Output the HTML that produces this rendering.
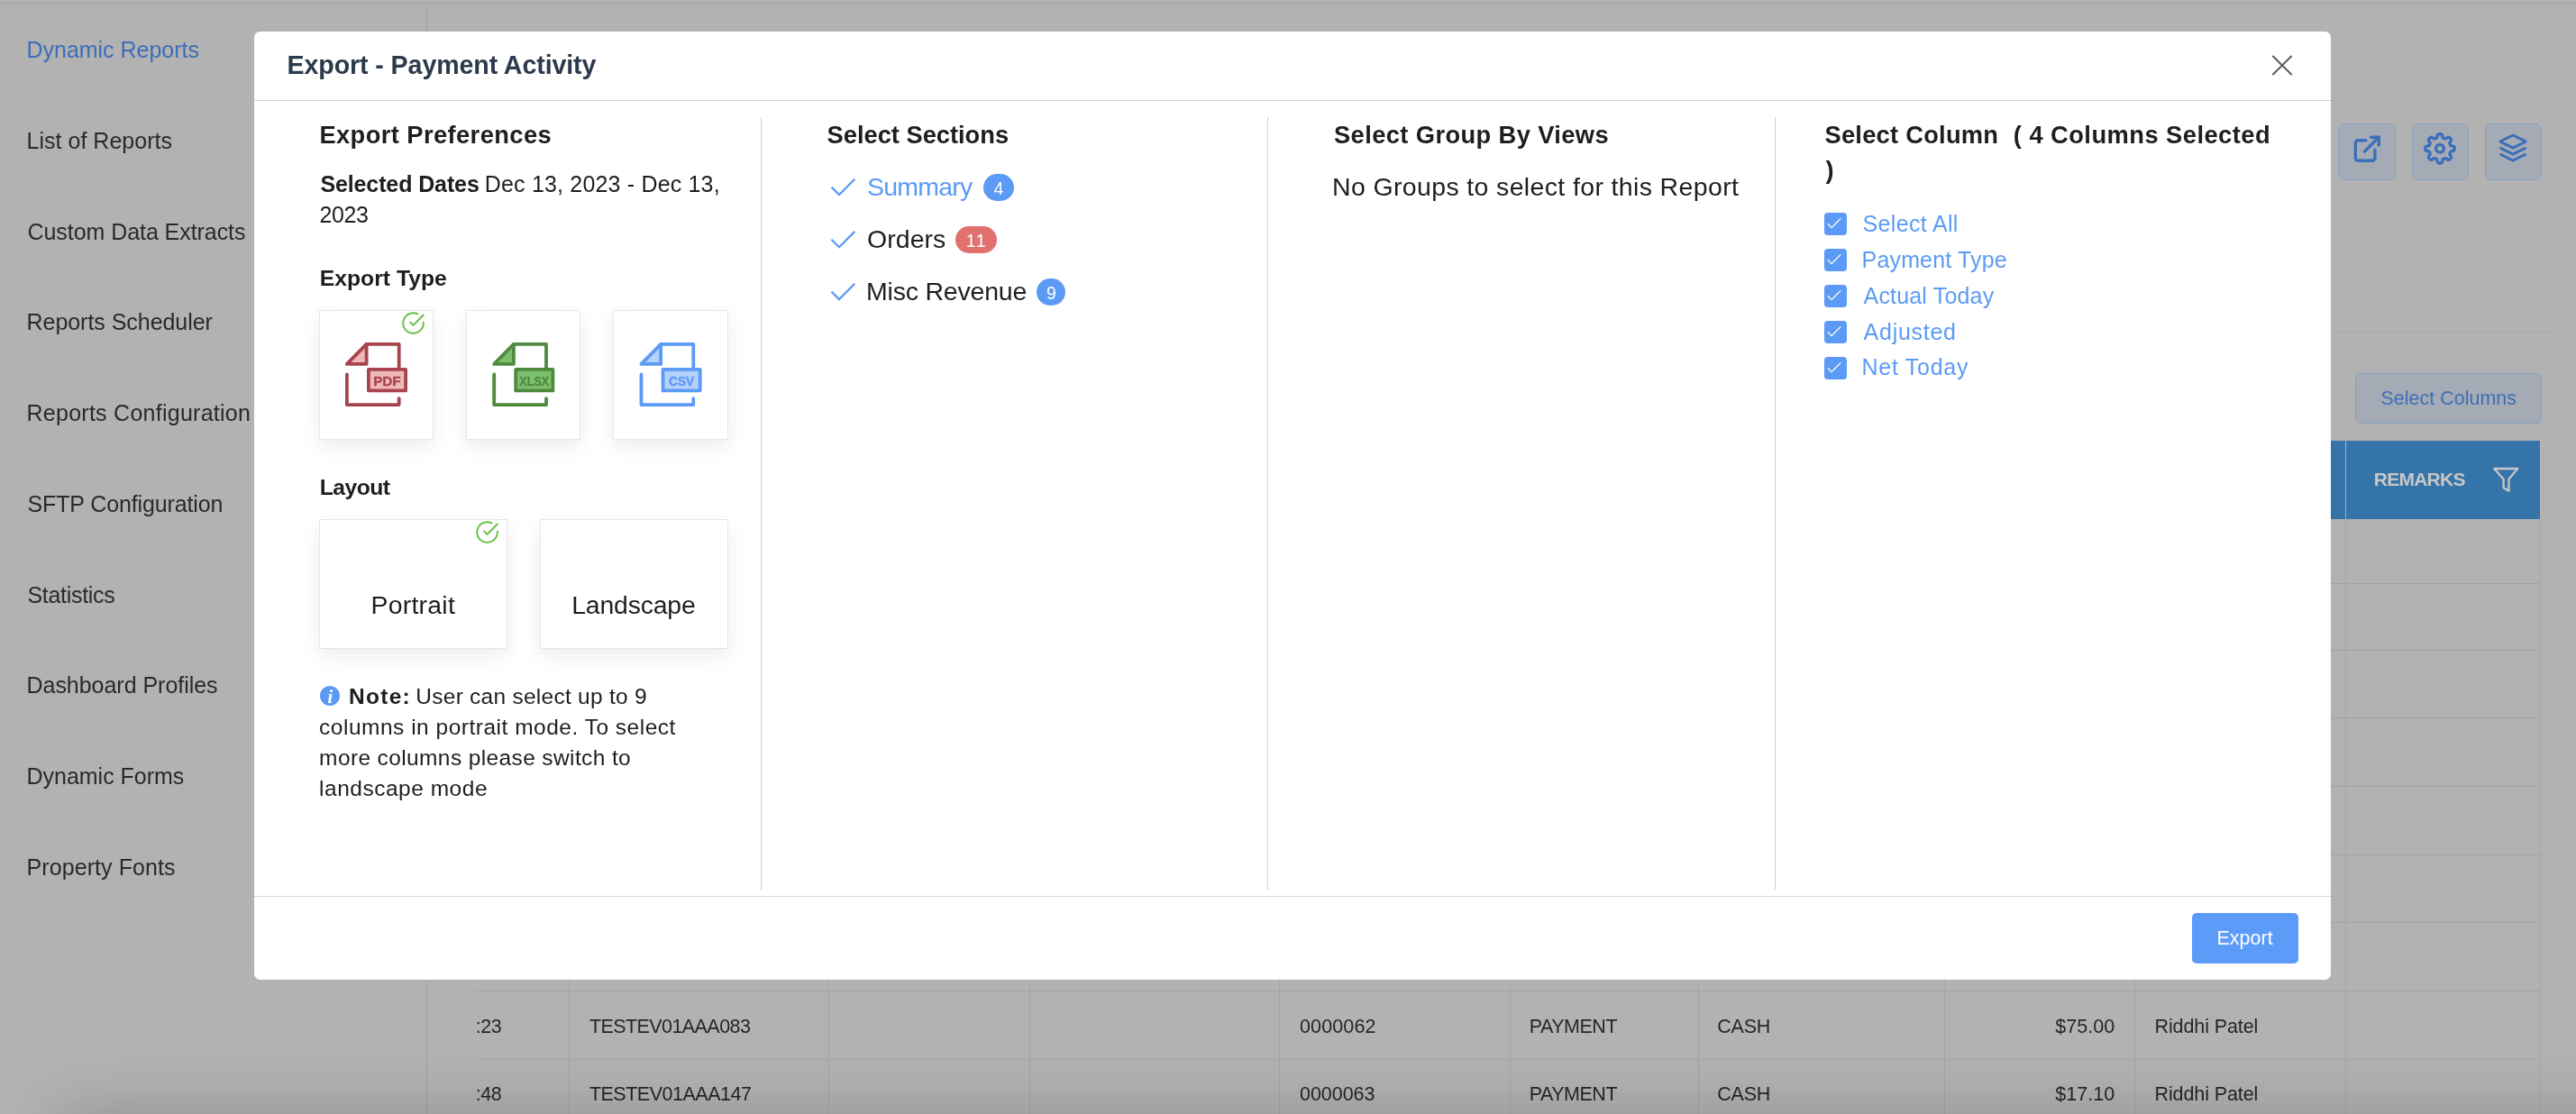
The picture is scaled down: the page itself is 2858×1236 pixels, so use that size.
<!DOCTYPE html>
<html><head><meta charset="utf-8">
<style>
*{box-sizing:border-box;margin:0;padding:0}
html{background:#b2b2b2}
body{position:relative;width:2858px;height:1236px;overflow:hidden;background:#b2b2b2;font-family:"Liberation Sans",sans-serif}
.abs{position:absolute}
.t{position:absolute;white-space:pre;line-height:1}
.card{background:#fff;border:1.4px solid #e6e6e6;box-shadow:0 8px 20px rgba(0,0,0,0.075)}
#bg{position:absolute;left:0;top:0;width:2858px;height:1236px;overflow:hidden;will-change:transform}
#md{position:absolute;left:0;top:0;width:2858px;height:1236px;overflow:hidden;will-change:transform}
</style></head><body>
<div id="bg">
<div class="abs" style="left:0;top:2.8px;width:2858px;height:1.1px;background:#a1a1a1"></div>
<div class="abs" style="left:473.0px;top:4px;width:1.1px;height:1232px;background:#a3a3a3"></div>
<div class="t" style="left:29.50px;top:43.00px;font-size:25px;color:#3d6db8;letter-spacing:-0.023px;">Dynamic Reports</div>
<div class="t" style="left:29.50px;top:144.00px;font-size:25px;color:#2a2a2a;letter-spacing:0.023px;">List of Reports</div>
<div class="t" style="left:30.50px;top:245.00px;font-size:25px;color:#2a2a2a;letter-spacing:-0.059px;">Custom Data Extracts</div>
<div class="t" style="left:29.50px;top:345.00px;font-size:25px;color:#2a2a2a;letter-spacing:-0.039px;">Reports Scheduler</div>
<div class="t" style="left:29.50px;top:446.00px;font-size:25px;color:#2a2a2a;letter-spacing:0.261px;">Reports Configuration</div>
<div class="t" style="left:30.50px;top:547.00px;font-size:25px;color:#2a2a2a;letter-spacing:-0.126px;">SFTP Configuration</div>
<div class="t" style="left:30.50px;top:648.00px;font-size:25px;color:#2a2a2a;letter-spacing:-0.303px;">Statistics</div>
<div class="t" style="left:29.50px;top:748.00px;font-size:25px;color:#2a2a2a;letter-spacing:-0.030px;">Dashboard Profiles</div>
<div class="t" style="left:29.50px;top:849.00px;font-size:25px;color:#2a2a2a;letter-spacing:-0.018px;">Dynamic Forms</div>
<div class="t" style="left:29.50px;top:950.00px;font-size:25px;color:#2a2a2a;letter-spacing:0.088px;">Property Fonts</div>
<div class="abs" style="left:528px;top:646.6px;width:2290.5px;height:1px;background:#a3a3a3"></div>
<div class="abs" style="left:528px;top:720.8px;width:2290.5px;height:1px;background:#a3a3a3"></div>
<div class="abs" style="left:528px;top:796.2px;width:2290.5px;height:1px;background:#a3a3a3"></div>
<div class="abs" style="left:528px;top:872.0px;width:2290.5px;height:1px;background:#a3a3a3"></div>
<div class="abs" style="left:528px;top:947.7px;width:2290.5px;height:1px;background:#a3a3a3"></div>
<div class="abs" style="left:528px;top:1023.1px;width:2290.5px;height:1px;background:#a3a3a3"></div>
<div class="abs" style="left:528px;top:1098.8px;width:2290.5px;height:1px;background:#a3a3a3"></div>
<div class="abs" style="left:528px;top:1174.9px;width:2290.5px;height:1px;background:#a3a3a3"></div>
<div class="abs" style="left:631.1px;top:576px;width:1px;height:660px;background:#a6a6a6"></div>
<div class="abs" style="left:918.8px;top:576px;width:1px;height:660px;background:#a6a6a6"></div>
<div class="abs" style="left:1142.0px;top:576px;width:1px;height:660px;background:#a6a6a6"></div>
<div class="abs" style="left:1418.7px;top:576px;width:1px;height:660px;background:#a6a6a6"></div>
<div class="abs" style="left:1674.7px;top:576px;width:1px;height:660px;background:#a6a6a6"></div>
<div class="abs" style="left:1883.7px;top:576px;width:1px;height:660px;background:#a6a6a6"></div>
<div class="abs" style="left:2156.7px;top:576px;width:1px;height:660px;background:#a6a6a6"></div>
<div class="abs" style="left:2367.8px;top:576px;width:1px;height:660px;background:#a6a6a6"></div>
<div class="abs" style="left:2601.9px;top:576px;width:1px;height:660px;background:#a6a6a6"></div>
<div class="abs" style="left:2817.9px;top:576px;width:1px;height:660px;background:#a6a6a6"></div>
<div class="abs" style="left:528px;top:488.7px;width:2290.2px;height:87px;background:#3574a8"></div>
<div class="abs" style="left:2601.8px;top:488.7px;width:1.2px;height:87px;background:#9bb3ca"></div>
<div class="t" style="left:2633.70px;top:521.00px;font-size:21px;color:#c8c8c8;letter-spacing:-0.727px;font-weight:bold;">REMARKS</div>
<svg class="abs" style="left:0;top:0;overflow:visible" width="1" height="1"><path d="M2767.3 520 H2793.2 L2783.4 531.8 V544.8 L2777.6 541.2 V531.8 Z" fill="none" stroke="#c6c6c6" stroke-width="2.3" stroke-linejoin="round"/></svg>
<div class="abs" style="left:2613.4px;top:414.2px;width:206.4px;height:55.4px;border-radius:6px;border:1.2px solid #859fc6;background:#a5abb5"></div>
<div class="t" style="left:2641.50px;top:432.00px;font-size:21.4px;color:#3f6fb8;letter-spacing:0.054px;">Select Columns</div>
<div class="abs" style="left:2400px;top:300px;width:438px;height:69px;border-bottom:1.3px solid #9eacbf;border-radius:0 0 9px 0"></div>
<div class="abs" style="left:2594px;top:136.9px;width:63.8px;height:62.8px;border-radius:7px;border:1.2px solid #859fc6;background:#a5abb5"></div>
<div class="abs" style="left:2675.9px;top:136.9px;width:62.9px;height:62.8px;border-radius:7px;border:1.2px solid #859fc6;background:#a5abb5"></div>
<div class="abs" style="left:2757.1px;top:136.9px;width:62.9px;height:62.8px;border-radius:7px;border:1.2px solid #859fc6;background:#a5abb5"></div>
<svg class="abs" style="left:2609.0px;top:148.1px;overflow:visible" width="34.56" height="34.56" viewBox="0 0 24 24" fill="none" stroke="#3b6eb8" stroke-width="2.36" stroke-linecap="round" stroke-linejoin="round"><path d="M18 12.6v6.4a2 2 0 0 1-2 2H5a2 2 0 0 1-2-2V7.4a2 2 0 0 1 2-2h6"/><polyline points="15 3 21 3 21 9"/><line x1="10" y1="14" x2="21" y2="3"/></svg>
<svg class="abs" style="left:0;top:0;overflow:visible" width="1" height="1"><path d="M2723.2 164.8 L2723.2 165.2 L2723.2 165.6 L2723.1 166.1 L2723.0 166.5 L2722.7 166.9 L2722.2 167.2 L2721.4 167.5 L2720.4 167.7 L2719.6 167.8 L2719.1 168.1 L2718.8 168.3 L2718.7 168.6 L2718.5 168.9 L2718.4 169.2 L2718.3 169.5 L2718.1 169.8 L2718.0 170.1 L2717.9 170.4 L2717.9 170.7 L2717.9 171.1 L2718.1 171.6 L2718.5 172.3 L2719.1 173.1 L2719.5 173.9 L2719.6 174.4 L2719.5 174.9 L2719.3 175.3 L2719.0 175.6 L2718.7 175.9 L2718.5 176.3 L2718.1 176.5 L2717.8 176.8 L2717.5 177.1 L2717.1 177.3 L2716.6 177.4 L2716.1 177.3 L2715.3 176.9 L2714.5 176.3 L2713.8 175.9 L2713.3 175.7 L2712.9 175.7 L2712.6 175.7 L2712.3 175.8 L2712.0 175.9 L2711.7 176.1 L2711.4 176.2 L2711.1 176.3 L2710.8 176.5 L2710.5 176.6 L2710.3 176.9 L2710.0 177.4 L2709.9 178.2 L2709.7 179.2 L2709.4 180.0 L2709.1 180.5 L2708.7 180.8 L2708.3 180.9 L2707.8 181.0 L2707.4 181.0 L2707.0 181.0 L2706.6 181.0 L2706.2 181.0 L2705.7 180.9 L2705.3 180.8 L2704.9 180.5 L2704.6 180.0 L2704.3 179.2 L2704.1 178.2 L2704.0 177.4 L2703.7 176.9 L2703.5 176.6 L2703.2 176.5 L2702.9 176.3 L2702.6 176.2 L2702.3 176.1 L2702.0 175.9 L2701.7 175.8 L2701.4 175.7 L2701.1 175.7 L2700.7 175.7 L2700.2 175.9 L2699.5 176.3 L2698.7 176.9 L2697.9 177.3 L2697.4 177.4 L2696.9 177.3 L2696.5 177.1 L2696.2 176.8 L2695.9 176.5 L2695.5 176.3 L2695.3 175.9 L2695.0 175.6 L2694.7 175.3 L2694.5 174.9 L2694.4 174.4 L2694.5 173.9 L2694.9 173.1 L2695.5 172.3 L2695.9 171.6 L2696.1 171.1 L2696.1 170.7 L2696.1 170.4 L2696.0 170.1 L2695.9 169.8 L2695.7 169.5 L2695.6 169.2 L2695.5 168.9 L2695.3 168.6 L2695.2 168.3 L2694.9 168.1 L2694.4 167.8 L2693.6 167.7 L2692.6 167.5 L2691.8 167.2 L2691.3 166.9 L2691.0 166.5 L2690.9 166.1 L2690.8 165.6 L2690.8 165.2 L2690.8 164.8 L2690.8 164.4 L2690.8 164.0 L2690.9 163.5 L2691.0 163.1 L2691.3 162.7 L2691.8 162.4 L2692.6 162.1 L2693.6 161.9 L2694.4 161.8 L2694.9 161.5 L2695.2 161.3 L2695.3 161.0 L2695.5 160.7 L2695.6 160.4 L2695.7 160.1 L2695.9 159.8 L2696.0 159.5 L2696.1 159.2 L2696.1 158.9 L2696.1 158.5 L2695.9 158.0 L2695.5 157.3 L2694.9 156.5 L2694.5 155.7 L2694.4 155.2 L2694.5 154.7 L2694.7 154.3 L2695.0 154.0 L2695.3 153.7 L2695.5 153.3 L2695.9 153.1 L2696.2 152.8 L2696.5 152.5 L2696.9 152.3 L2697.4 152.2 L2697.9 152.3 L2698.7 152.7 L2699.5 153.3 L2700.2 153.7 L2700.7 153.9 L2701.1 153.9 L2701.4 153.9 L2701.7 153.8 L2702.0 153.7 L2702.3 153.5 L2702.6 153.4 L2702.9 153.3 L2703.2 153.1 L2703.5 153.0 L2703.7 152.7 L2704.0 152.2 L2704.1 151.4 L2704.3 150.4 L2704.6 149.6 L2704.9 149.1 L2705.3 148.8 L2705.7 148.7 L2706.2 148.6 L2706.6 148.6 L2707.0 148.6 L2707.4 148.6 L2707.8 148.6 L2708.3 148.7 L2708.7 148.8 L2709.1 149.1 L2709.4 149.6 L2709.7 150.4 L2709.9 151.4 L2710.0 152.2 L2710.3 152.7 L2710.5 153.0 L2710.8 153.1 L2711.1 153.3 L2711.4 153.4 L2711.7 153.5 L2712.0 153.7 L2712.3 153.8 L2712.6 153.9 L2712.9 153.9 L2713.3 153.9 L2713.8 153.7 L2714.5 153.3 L2715.3 152.7 L2716.1 152.3 L2716.6 152.2 L2717.1 152.3 L2717.5 152.5 L2717.8 152.8 L2718.1 153.1 L2718.5 153.3 L2718.7 153.7 L2719.0 154.0 L2719.3 154.3 L2719.5 154.7 L2719.6 155.2 L2719.5 155.7 L2719.1 156.5 L2718.5 157.3 L2718.1 158.0 L2717.9 158.5 L2717.9 158.9 L2717.9 159.2 L2718.0 159.5 L2718.1 159.8 L2718.3 160.1 L2718.4 160.4 L2718.5 160.7 L2718.7 161.0 L2718.8 161.3 L2719.1 161.5 L2719.6 161.8 L2720.4 161.9 L2721.4 162.1 L2722.2 162.4 L2722.7 162.7 L2723.0 163.1 L2723.1 163.5 L2723.2 164.0 L2723.2 164.4 Z" fill="none" stroke="#3b6eb8" stroke-width="3.3" stroke-linejoin="round"/><circle cx="2707.0" cy="164.8" r="4.4" fill="none" stroke="#3b6eb8" stroke-width="3.2"/></svg>
<svg class="abs" style="left:0;top:0;overflow:visible" width="1" height="1"><g fill="none" stroke="#3b6eb8" stroke-width="3.0" stroke-linejoin="miter" stroke-miterlimit="2"><path d="M2788.1 150 L2773.6 157 L2788.1 164 L2802.6 157 Z"/><path d="M2773.6 164 L2788.1 171 L2802.6 164"/><path d="M2773.6 171 L2788.1 178 L2802.6 171"/></g></svg>
<div class="t" style="left:527.70px;top:1129.00px;font-size:21.5px;color:#262626;letter-spacing:-0.465px;">:23</div>
<div class="t" style="left:653.90px;top:1129.00px;font-size:21.5px;color:#262626;letter-spacing:-0.575px;">TESTEV01AAA083</div>
<div class="t" style="left:1442.00px;top:1129.00px;font-size:21.5px;color:#262626;letter-spacing:0.126px;">0000062</div>
<div class="t" style="left:1696.70px;top:1129.00px;font-size:21.5px;color:#262626;letter-spacing:-0.484px;">PAYMENT</div>
<div class="t" style="left:1905.20px;top:1129.00px;font-size:21.5px;color:#262626;letter-spacing:-0.202px;">CASH</div>
<div class="t" style="left:2280.30px;top:1129.00px;font-size:21.5px;color:#262626;letter-spacing:0.020px;">$75.00</div>
<div class="t" style="left:2390.50px;top:1129.00px;font-size:21.5px;color:#262626;letter-spacing:-0.105px;">Riddhi Patel</div>
<div class="t" style="left:527.70px;top:1204.00px;font-size:21.5px;color:#262626;letter-spacing:-0.465px;">:48</div>
<div class="t" style="left:653.90px;top:1204.00px;font-size:21.5px;color:#262626;letter-spacing:-0.498px;">TESTEV01AAA147</div>
<div class="t" style="left:1442.00px;top:1204.00px;font-size:21.5px;color:#262626;letter-spacing:-0.041px;">0000063</div>
<div class="t" style="left:1696.70px;top:1204.00px;font-size:21.5px;color:#262626;letter-spacing:-0.484px;">PAYMENT</div>
<div class="t" style="left:1905.20px;top:1204.00px;font-size:21.5px;color:#262626;letter-spacing:-0.202px;">CASH</div>
<div class="t" style="left:2280.30px;top:1204.00px;font-size:21.5px;color:#262626;letter-spacing:0.020px;">$17.10</div>
<div class="t" style="left:2390.50px;top:1204.00px;font-size:21.5px;color:#262626;letter-spacing:-0.105px;">Riddhi Patel</div>
<div class="abs" style="left:70px;top:1242px;width:3000px;height:60px;box-shadow:0 0 70px 4px rgba(0,0,0,0.21)"></div>
</div>
<div id="md">
<div class="abs" style="left:282px;top:34.8px;width:2304px;height:1052.1px;background:#fff;border-radius:6.5px"></div>
<div class="t" style="left:318.60px;top:58.00px;font-size:28.6px;color:#2c3a4d;letter-spacing:-0.104px;font-weight:bold;">Export - Payment Activity</div>
<div class="abs" style="left:282px;top:110.7px;width:2304px;height:1.2px;background:#d2d2d2"></div>
<svg class="abs" style="left:0;top:0;overflow:visible" width="1" height="1"><path d="M2521.9 62.5 L2542.1 82.5 M2542.1 62.5 L2521.9 82.5" stroke="#58585c" stroke-width="1.9" stroke-linecap="round" fill="none"/></svg>
<div class="abs" style="left:282px;top:993.6px;width:2304px;height:1.2px;background:#d2d2d2"></div>
<div class="abs" style="left:2432.1px;top:1013.1px;width:117.7px;height:55.6px;border-radius:5px;background:#5c9cf8"></div>
<div class="t" style="left:2459.40px;top:1031.00px;font-size:21.4px;color:#fff;letter-spacing:0.104px;">Export</div>
<div class="abs" style="left:844.0px;top:129.8px;width:1.2px;height:858px;background:#cfcfcf"></div>
<div class="abs" style="left:1405.9px;top:129.8px;width:1.2px;height:858px;background:#cfcfcf"></div>
<div class="abs" style="left:1968.9px;top:129.8px;width:1.2px;height:858px;background:#cfcfcf"></div>
<div class="t" style="left:354.40px;top:136.00px;font-size:27.3px;color:#1e1e1e;letter-spacing:0.408px;font-weight:bold;">Export Preferences</div>
<div class="t" style="left:355.40px;top:192.00px;font-size:25px;color:#1e1e1e;letter-spacing:-0.113px;font-weight:bold;">Selected Dates</div>
<div class="t" style="left:537.80px;top:192.00px;font-size:25px;color:#1e1e1e;letter-spacing:0.179px;">Dec 13, 2023 - Dec 13,</div>
<div class="t" style="left:354.40px;top:226.00px;font-size:25px;color:#1e1e1e;letter-spacing:-0.370px;">2023</div>
<div class="t" style="left:354.80px;top:297.00px;font-size:24.7px;color:#1e1e1e;letter-spacing:0.010px;font-weight:bold;">Export Type</div>
<div class="abs card" style="left:354.2px;top:344.2px;width:126.6px;height:144px"></div>
<div class="abs card" style="left:517.3px;top:344.2px;width:126.6px;height:144px"></div>
<div class="abs card" style="left:680.4px;top:344.2px;width:127.5px;height:144px"></div>
<div class="t" style="left:354.80px;top:529.00px;font-size:24.7px;color:#1e1e1e;letter-spacing:-0.560px;font-weight:bold;">Layout</div>
<div class="abs card" style="left:354.2px;top:576.3px;width:208.5px;height:144px"></div>
<div class="abs card" style="left:599.3px;top:576.3px;width:208.4px;height:144px"></div>
<div class="t" style="left:411.50px;top:657.00px;font-size:28.4px;color:#1e1e1e;letter-spacing:0.254px;">Portrait</div>
<div class="t" style="left:634.20px;top:657.00px;font-size:28.4px;color:#1e1e1e;letter-spacing:-0.178px;">Landscape</div>
<svg class="abs" style="left:355.1px;top:760.9px" width="22" height="22" viewBox="0 0 22 22"><circle cx="11" cy="11" r="11" fill="#5b9bf5"/><text x="11.3" y="19.2" font-family="Liberation Serif" font-style="italic" font-weight="bold" font-size="20.5" fill="#fff" text-anchor="middle">i</text></svg>
<div class="t" style="left:387.10px;top:761.00px;font-size:24.5px;color:#1e1e1e;letter-spacing:1.264px;font-weight:bold;">Note:</div>
<div class="t" style="left:461.30px;top:761.00px;font-size:24.5px;color:#1e1e1e;letter-spacing:0.257px;">User can select up to 9</div>
<div class="t" style="left:354.10px;top:795.00px;font-size:24.5px;color:#1e1e1e;letter-spacing:0.505px;">columns in portrait mode. To select</div>
<div class="t" style="left:354.10px;top:829.00px;font-size:24.5px;color:#1e1e1e;letter-spacing:0.380px;">more columns please switch to</div>
<div class="t" style="left:354.10px;top:863.00px;font-size:24.5px;color:#1e1e1e;letter-spacing:0.510px;">landscape mode</div>
<div class="t" style="left:917.60px;top:136.00px;font-size:27.3px;color:#1e1e1e;letter-spacing:-0.021px;font-weight:bold;">Select Sections</div>
<svg class="abs" style="left:0;top:0;overflow:visible" width="1" height="1"><path d="M922.5 207.5 L931 216.0 L948.3 198.7" stroke="#5b9bf5" stroke-width="2.3" fill="none"/></svg>
<div class="t" style="left:962.00px;top:193.00px;font-size:28.5px;color:#5b9bf5;letter-spacing:-0.764px;">Summary</div>
<div class="abs" style="left:1090.8px;top:192.9px;width:33.9px;height:29.8px;border-radius:15px;background:#5b9bf5"></div>
<div class="t" style="left:1102.50px;top:200.00px;font-size:19.5px;color:#fff;letter-spacing:0.000px;">4</div>
<svg class="abs" style="left:0;top:0;overflow:visible" width="1" height="1"><path d="M922.5 265.7 L931 274.2 L948.3 256.9" stroke="#5b9bf5" stroke-width="2.3" fill="none"/></svg>
<div class="t" style="left:962.00px;top:251.00px;font-size:28.5px;color:#1e1e1e;letter-spacing:0.050px;">Orders</div>
<div class="abs" style="left:1059.6px;top:251.1px;width:46.1px;height:29.8px;border-radius:15px;background:#e2706e"></div>
<div class="t" style="left:1071.65px;top:258.00px;font-size:19.5px;color:#fff;letter-spacing:1.602px;">11</div>
<svg class="abs" style="left:0;top:0;overflow:visible" width="1" height="1"><path d="M922.5 323.6 L931 332.1 L948.3 314.8" stroke="#5b9bf5" stroke-width="2.3" fill="none"/></svg>
<div class="t" style="left:961.00px;top:309.00px;font-size:28.5px;color:#1e1e1e;letter-spacing:-0.202px;">Misc Revenue</div>
<div class="abs" style="left:1149.9px;top:309.0px;width:32.6px;height:29.8px;border-radius:15px;background:#5b9bf5"></div>
<div class="t" style="left:1160.95px;top:316.00px;font-size:19.5px;color:#fff;letter-spacing:0.000px;">9</div>
<div class="t" style="left:1480.00px;top:136.00px;font-size:27.3px;color:#1e1e1e;letter-spacing:0.392px;font-weight:bold;">Select Group By Views</div>
<div class="t" style="left:1478.00px;top:193.00px;font-size:28.5px;color:#1e1e1e;letter-spacing:0.357px;">No Groups to select for this Report</div>
<div class="t" style="left:2024.50px;top:136.00px;font-size:27.3px;color:#1e1e1e;letter-spacing:0.240px;font-weight:bold;">Select Column</div>
<div class="t" style="left:2233.80px;top:136.00px;font-size:27.3px;color:#1e1e1e;letter-spacing:0.458px;font-weight:bold;">( 4 Columns Selected</div>
<div class="t" style="left:2025.50px;top:175.00px;font-size:27.3px;color:#1e1e1e;letter-spacing:0.000px;font-weight:bold;">)</div>
<div class="abs" style="left:2023.9px;top:236.0px;width:25.1px;height:24.9px;border-radius:4px;background:#5b9bf5"><svg width="25" height="25" viewBox="0 0 25 25" style="display:block"><path d="M3.8 12.1 L8.1 16.6 L18.2 6.4" stroke="#fff" stroke-width="1.35" fill="none"/></svg></div>
<div class="t" style="left:2066.60px;top:236.00px;font-size:25px;color:#5b9bf5;letter-spacing:0.327px;">Select All</div>
<div class="abs" style="left:2023.9px;top:276.0px;width:25.1px;height:24.9px;border-radius:4px;background:#5b9bf5"><svg width="25" height="25" viewBox="0 0 25 25" style="display:block"><path d="M3.8 12.1 L8.1 16.6 L18.2 6.4" stroke="#fff" stroke-width="1.35" fill="none"/></svg></div>
<div class="t" style="left:2065.60px;top:276.00px;font-size:25px;color:#5b9bf5;letter-spacing:0.155px;">Payment Type</div>
<div class="abs" style="left:2023.9px;top:315.9px;width:25.1px;height:24.9px;border-radius:4px;background:#5b9bf5"><svg width="25" height="25" viewBox="0 0 25 25" style="display:block"><path d="M3.8 12.1 L8.1 16.6 L18.2 6.4" stroke="#fff" stroke-width="1.35" fill="none"/></svg></div>
<div class="t" style="left:2067.60px;top:316.00px;font-size:25px;color:#5b9bf5;letter-spacing:0.169px;">Actual Today</div>
<div class="abs" style="left:2023.9px;top:355.9px;width:25.1px;height:24.9px;border-radius:4px;background:#5b9bf5"><svg width="25" height="25" viewBox="0 0 25 25" style="display:block"><path d="M3.8 12.1 L8.1 16.6 L18.2 6.4" stroke="#fff" stroke-width="1.35" fill="none"/></svg></div>
<div class="t" style="left:2067.60px;top:356.00px;font-size:25px;color:#5b9bf5;letter-spacing:0.731px;">Adjusted</div>
<div class="abs" style="left:2023.9px;top:395.9px;width:25.1px;height:24.9px;border-radius:4px;background:#5b9bf5"><svg width="25" height="25" viewBox="0 0 25 25" style="display:block"><path d="M3.8 12.1 L8.1 16.6 L18.2 6.4" stroke="#fff" stroke-width="1.35" fill="none"/></svg></div>
<div class="t" style="left:2065.60px;top:395.00px;font-size:25px;color:#5b9bf5;letter-spacing:0.717px;">Net Today</div>
<svg class="abs" style="left:0;top:0;overflow:visible" width="1" height="1"><g fill="none" stroke="#a8444e" stroke-width="3.8" stroke-linejoin="round" stroke-linecap="round"><path d="M406.6 381.9 L406.6 403.9 L384.9 403.9 Z" fill="#f0b9b9"/><path d="M406.6 381.9 H442.7 V409.9"/><path d="M384.9 415.4 V449.1 H442.7 V442.1"/><rect x="408.9" y="409.9" width="41.2" height="23.5" fill="#f0b9b9"/></g><text x="414.2" y="428.0" font-family="Liberation Sans" font-weight="bold" font-size="14.8" textLength="30.5" lengthAdjust="spacingAndGlyphs" fill="#a8444e" stroke="#a8444e" stroke-width="0.4">PDF</text></svg>
<svg class="abs" style="left:0;top:0;overflow:visible" width="1" height="1"><g fill="none" stroke="#4f8a3f" stroke-width="3.8" stroke-linejoin="round" stroke-linecap="round"><path d="M569.9 381.9 L569.9 403.9 L548.2 403.9 Z" fill="#7cc06c"/><path d="M569.9 381.9 H606.0 V409.9"/><path d="M548.2 415.4 V449.1 H606.0 V442.1"/><rect x="572.2" y="409.9" width="41.2" height="23.5" fill="#7cc06c"/></g><text x="576.3" y="428.0" font-family="Liberation Sans" font-weight="bold" font-size="14.8" textLength="32.9" lengthAdjust="spacingAndGlyphs" fill="#4f8a3f" stroke="#4f8a3f" stroke-width="0.4">XLSX</text></svg>
<svg class="abs" style="left:0;top:0;overflow:visible" width="1" height="1"><g fill="none" stroke="#5b9bf5" stroke-width="3.8" stroke-linejoin="round" stroke-linecap="round"><path d="M733.2 381.9 L733.2 403.9 L711.5 403.9 Z" fill="#b5d0fa"/><path d="M733.2 381.9 H769.3 V409.9"/><path d="M711.5 415.4 V449.1 H769.3 V442.1"/><rect x="735.5" y="409.9" width="41.2" height="23.5" fill="#b5d0fa"/></g><text x="742.0" y="428.0" font-family="Liberation Sans" font-weight="bold" font-size="14.8" textLength="28.3" lengthAdjust="spacingAndGlyphs" fill="#5b9bf5" stroke="#5b9bf5" stroke-width="0.4">CSV</text></svg>
<svg class="abs" style="left:445.0px;top:344.9px" width="27.1" height="27.1" viewBox="0 0 24 24" fill="none" stroke="#6cc04a" stroke-width="1.77" stroke-linecap="round" stroke-linejoin="round"><path d="M22 11.08V12a10 10 0 1 1-5.93-9.14"/><polyline points="22 4 12 14.01 9 11.01"/></svg>
<svg class="abs" style="left:527.2px;top:576.9px" width="27.1" height="27.1" viewBox="0 0 24 24" fill="none" stroke="#6cc04a" stroke-width="1.77" stroke-linecap="round" stroke-linejoin="round"><path d="M22 11.08V12a10 10 0 1 1-5.93-9.14"/><polyline points="22 4 12 14.01 9 11.01"/></svg>
</div>
</body></html>
